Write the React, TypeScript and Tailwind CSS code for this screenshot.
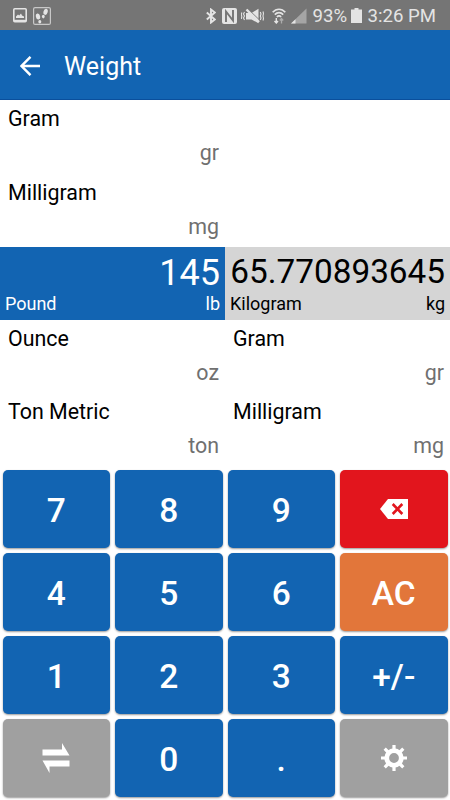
import type { ReactNode } from 'react';

type Unit = { name: string; symbol: string };

const fromUnits: Unit[] = [
  { name: 'Gram', symbol: 'gr' },
  { name: 'Milligram', symbol: 'mg' },
];

const nextUnits: Unit[] = [
  { name: 'Ounce', symbol: 'oz' },
  { name: 'Gram', symbol: 'gr' },
  { name: 'Ton Metric', symbol: 'ton' },
  { name: 'Milligram', symbol: 'mg' },
];

const BackspaceIcon = () => (
  <svg className="w-[28px] h-[20px]" viewBox="0 0 28 20" fill="none">
    <path d="M8 0H28V20H8L0 10Z" fill="#fff" />
    <path d="M12.7 5L22.3 15M22.3 5L12.7 15" stroke="#e2151d" strokeWidth="2.6" />
  </svg>
);

const SwapIcon = () => (
  <svg className="w-[28px] h-[30px]" viewBox="0 0 28 30" fill="#fff">
    <path d="M0.5 6.5H20V0L27.5 12.5H0.5Z" />
    <path d="M0.5 17.5H27.5V23.5H7.5V30Z" />
  </svg>
);

const GearIcon = () => (
  <svg className="w-[26px] h-[26px]" viewBox="-13 -13 26 26" fill="none" stroke="#fff">
    <circle r="7.3" strokeWidth="4.8" />
    <path
      strokeWidth="3.2"
      d="M0 -13V-8M0 13V8M-13 0H-8M13 0H8M-9.3 -9.3L-6 -6M9.3 9.3L6 6M-9.3 9.3L-6 6M9.3 -9.3L6 -6"
    />
  </svg>
);

const keys: { id: string; label: ReactNode; color: string }[] = [
  { id: '7', label: '7', color: 'bg-[#1264b2]' },
  { id: '8', label: '8', color: 'bg-[#1264b2]' },
  { id: '9', label: '9', color: 'bg-[#1264b2]' },
  { id: 'back', label: <BackspaceIcon />, color: 'bg-[#e2151d]' },
  { id: '4', label: '4', color: 'bg-[#1264b2]' },
  { id: '5', label: '5', color: 'bg-[#1264b2]' },
  { id: '6', label: '6', color: 'bg-[#1264b2]' },
  { id: 'ac', label: 'AC', color: 'bg-[#e2763a]' },
  { id: '1', label: '1', color: 'bg-[#1264b2]' },
  { id: '2', label: '2', color: 'bg-[#1264b2]' },
  { id: '3', label: '3', color: 'bg-[#1264b2]' },
  { id: 'sign', label: '+/-', color: 'bg-[#1264b2]' },
  { id: 'swap', label: <SwapIcon />, color: 'bg-[#a0a0a0]' },
  { id: '0', label: '0', color: 'bg-[#1264b2]' },
  { id: 'dot', label: '.', color: 'bg-[#1264b2]' },
  { id: 'settings', label: <GearIcon />, color: 'bg-[#a0a0a0]' },
];

const StatusBar = () => (
  <div className="flex h-[30px] items-center bg-[#757575] pl-[13px] pr-[14px] pt-px text-[#e4e4e4]">
    <svg className="h-[15px] w-[14px]" viewBox="0 0 14 15" fill="none">
      <rect x="0.8" y="0.8" width="12.4" height="13" rx="1" stroke="currentColor" strokeWidth="1.6" />
      <path d="M3 10V8.5L5 6.5L6.2 7.5L8 5.5L9 7.5L11 8.5V10Z" fill="currentColor" />
      <path d="M1 12.8H13" stroke="currentColor" strokeWidth="2" />
    </svg>
    <svg className="ml-[6px] h-[18px] w-[18px]" viewBox="0 0 18 18" fill="none">
      <rect x="0.6" y="0.6" width="16.8" height="16.8" rx="1.5" stroke="currentColor" strokeOpacity="0.75" strokeWidth="1.2" />
      <g fill="currentColor">
        <ellipse cx="5" cy="9.5" rx="2.1" ry="3.1" transform="rotate(-12 5 9.5)" />
        <ellipse cx="6.8" cy="14.8" rx="1.5" ry="1.8" />
        <ellipse cx="12.6" cy="4.8" rx="2.1" ry="3.1" transform="rotate(15 12.6 4.8)" />
        <ellipse cx="10.3" cy="9.6" rx="1.4" ry="1.8" />
      </g>
    </svg>
    <svg className="ml-auto h-[16px] w-[10px]" viewBox="0 0 10 16" fill="none" stroke="currentColor" strokeWidth="1.9">
      <path d="M0.8 4.5L8.8 11.5L5 14.5V1.5L8.8 4.5L0.8 11.5" />
    </svg>
    <svg className="ml-[6px] h-[16px] w-[15px]" viewBox="0 0 15 16">
      <rect width="15" height="16" rx="2" fill="currentColor" />
      <path d="M4 14V3.5L11 12.5V2" fill="none" stroke="#757575" strokeWidth="1.9" />
    </svg>
    <svg className="ml-[4px] h-[16px] w-[23px]" viewBox="0 0 23 16" fill="none" stroke="currentColor">
      <path d="M5 5H10.5L17.5 0.8V15.2L10.5 11.5H5Z" fill="currentColor" stroke="none" />
      <path d="M7.5 1.5L19 12.5" stroke="#757575" strokeWidth="1" />
      <path d="M5.5 1.5L18 14" strokeWidth="2.4" />
      <path d="M3.5 4L2.5 6L3.5 8L2.5 10L3.5 12M0.8 4.5L0.3 6.5L0.8 8.5L0.3 11M19.3 4L20 6L19.3 8L20 10L19.3 12M22 3.5L22.5 5.5L22 8L22.5 10.5L22 12.5" strokeWidth="1.1" />
    </svg>
    <svg className="ml-[8px] h-[16px] w-[14px]" viewBox="0 0 14 16" fill="none" stroke="currentColor">
      <path d="M0.7 4.3C4.3 0.2 9.7 0.2 13.3 4.3M2.8 6.7C5.3 4 8.7 4 11.2 6.7M4.9 9C6.2 7.6 7.8 7.6 9.1 9" strokeWidth="1.7" />
      <path d="M4.3 10V15M2.5 13L4.3 15L6 13" strokeWidth="1.4" />
      <path d="M9.5 15.5V10.5M7.8 12.5L9.5 10.5L11.2 12.5" strokeWidth="1.3" opacity="0.5" />
    </svg>
    <svg className="ml-[5px] h-[16px] w-[16px]" viewBox="0 0 16 16">
      <path d="M0 15.5L15.5 0.5V15.5Z" fill="#a5a5a5" />
      <path d="M0 15.5L4.5 11.2V15.5Z" fill="currentColor" />
    </svg>
    <span className="ml-[6px] w-[34px] whitespace-nowrap pt-[2px] text-[18.6px] leading-none">93%</span>
    <svg className="ml-[4px] h-[15px] w-[11px]" viewBox="0 0 11 15" fill="currentColor">
      <path d="M3.5 0H7.5V1.5H11V15H0V1.5H3.5Z" />
    </svg>
    <span className="ml-[6px] whitespace-nowrap pt-[2px] text-[18.6px] leading-none">3:26 PM</span>
  </div>
);

const UnitItem = ({ name, symbol }: Unit) => (
  <div className="flex h-full flex-col pl-[8px] pr-[6px] pt-[6px]">
    <span className="text-[21.4px] leading-[26px] text-black">{name}</span>
    <span className="mt-[8px] text-right text-[21.4px] leading-[26px] text-[#707070]">{symbol}</span>
  </div>
);

const App = () => {
  return (
    <div className="flex h-[800px] w-[450px] flex-col overflow-hidden bg-white font-['Roboto',sans-serif]">
      <StatusBar />
      <header className="flex h-[70px] items-center border-b border-[#0a4f9c] bg-[#1264b2] pl-[20px] pt-[2px] text-white">
        <svg className="h-[20px] w-[20px]" viewBox="0 0 20 20" fill="none" stroke="currentColor" strokeWidth="2.4">
          <path d="M20 10H2M10.5 0.8L1.5 10L10.5 19.2" />
        </svg>
        <h1 className="ml-[24px] mt-[3px] text-[25px] leading-[30px]">Weight</h1>
      </header>

      <div className="grid h-[147px] w-[225px] grid-rows-2">
        {fromUnits.map((unit) => (
          <UnitItem key={unit.name} {...unit} />
        ))}
      </div>

      <div className="grid h-[73px] grid-cols-2">
        <div className="flex flex-col bg-[#1264b2] px-[5px] pt-[7px] text-white">
          <span className="text-right text-[36px] leading-[39px]">145</span>
          <div className="flex justify-between text-[18px] leading-[22px]">
            <span>Pound</span>
            <span>lb</span>
          </div>
        </div>
        <div className="flex flex-col bg-[#d5d5d5] px-[5px] pt-[4px] text-black">
          <span className="text-right text-[33.3px] leading-[42px]">65.770893645</span>
          <div className="flex justify-between text-[18px] leading-[22px]">
            <span>Kilogram</span>
            <span>kg</span>
          </div>
        </div>
      </div>

      <div className="grid h-[146px] grid-cols-2 grid-rows-2">
        {nextUnits.map((unit) => (
          <UnitItem key={unit.name} {...unit} />
        ))}
      </div>

      <div className="grid flex-1 grid-cols-4 grid-rows-4 gap-[5px] px-[2.5px] pt-[4px] pb-[3px]">
        {keys.map((key) => (
          <button
            key={key.id}
            className={`${key.color} flex items-center justify-center rounded-[5px] text-[33.5px] font-medium leading-none text-white shadow-[0_1px_2px_rgba(0,0,0,0.4)]`}
          >
            {typeof key.label === 'string' ? <span className="pt-[4px]">{key.label}</span> : key.label}
          </button>
        ))}
      </div>
    </div>
  );
};

export default App;
